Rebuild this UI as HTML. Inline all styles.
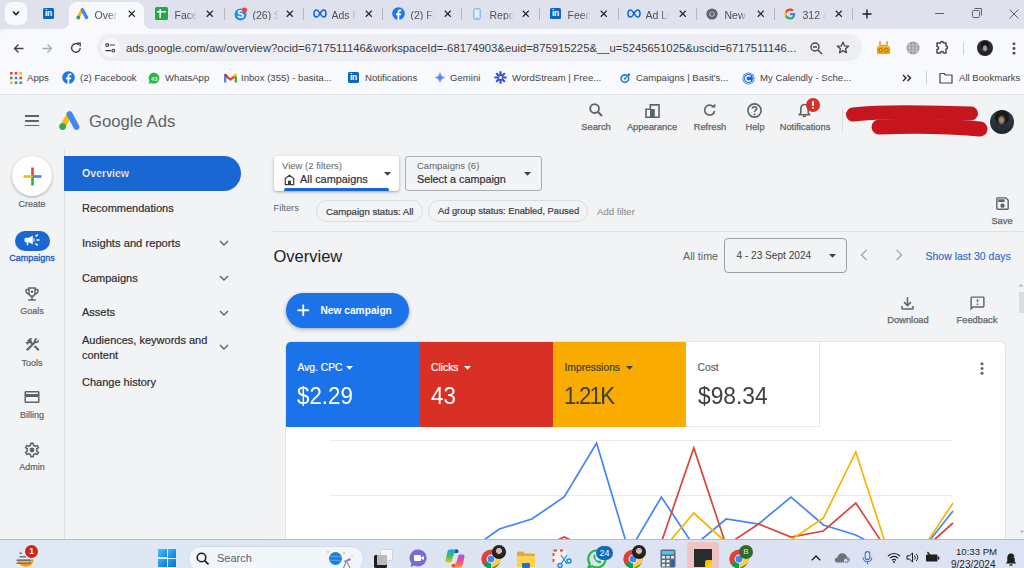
<!DOCTYPE html>
<html><head><meta charset="utf-8">
<style>
*{box-sizing:border-box;margin:0;padding:0}
html,body{width:1024px;height:568px;overflow:hidden;background:#f1f3f4;font-family:"Liberation Sans",sans-serif;position:relative}
.a{position:absolute}
.t{position:absolute;white-space:nowrap;line-height:1}
svg{position:absolute;overflow:visible}
/* chrome */
#tabs{left:0;top:0;width:1024px;height:29px;background:#dfe2ed}
#toolbar{left:0;top:29px;width:1024px;height:36px;background:#f8f9fc;border-top-left-radius:8px}
#bm{left:0;top:65px;width:1024px;height:30px;background:#f8f9fc;border-bottom:1px solid #e1e3e8}
.tabt{font-size:10.5px;color:#505050}
.sep{position:absolute;width:1px;height:12px;top:8px;background:#b4b7c0}
.x{position:absolute;font-size:13px;color:#202124}
.bmt{font-size:9.6px;color:#444}
/* ads */
.nav{font-size:11px;color:#2d2e31;-webkit-text-stroke:0.2px #2d2e31}
.rail{font-size:9px;color:#5f6368;text-align:center;width:64px;left:0;-webkit-text-stroke:0.2px currentColor}
.hdr{font-size:9.3px;color:#5f6368;text-align:center;-webkit-text-stroke:0.25px #5f6368}
#taskbar{left:0;top:539px;width:1024px;height:29px;background:linear-gradient(90deg,#dfe9f3 0%,#dde6f3 30%,#dce2f2 70%,#dce3f2 100%);border-top:1px solid #b6bbc2}
</style></head><body>

<!-- TAB STRIP -->
<div id="tabs" class="a">
  <div class="a" style="left:5px;top:2px;width:22px;height:23px;background:#f8f9fc;border-radius:7px"></div>
  <svg style="left:11px;top:9px" width="10" height="8" viewBox="0 0 10 8"><path d="M2 2.5 L5 5.5 L8 2.5" stroke="#202124" stroke-width="1.6" fill="none"/></svg>
  <!-- linkedin -->
  <div class="a" style="left:43px;top:8px;width:11px;height:11px;background:#0a66c2;border-radius:1.5px;color:#fff;font-size:8.5px;font-weight:700;line-height:11px;text-align:center;letter-spacing:-0.3px">in</div>
  <!-- active tab -->
  <div class="a" style="left:69px;top:2px;width:75px;height:27px;background:#f8f9fc;border-radius:8px 8px 0 0"></div>
  <div class="a" style="left:61px;top:21px;width:8px;height:8px;background:radial-gradient(circle at 0 0,#dfe2ed 8px,#f8f9fc 8.5px)"></div>
  <div class="a" style="left:144px;top:21px;width:8px;height:8px;background:radial-gradient(circle at 100% 0,#dfe2ed 8px,#f8f9fc 8.5px)"></div>

  <!-- tab icons -->
  <svg style="left:76px;top:8px" width="13" height="12" viewBox="0 0 13 12"><path d="M6.3 1.8 L3 7.8" stroke="#fbbc04" stroke-width="3" stroke-linecap="round"/><circle cx="2.3" cy="9.4" r="2" fill="#34a853"/><path d="M6.3 1.8 L10.6 9.6" stroke="#4285f4" stroke-width="3.3" stroke-linecap="round"/></svg>
  <div class="t tabt" style="left:94.5px;top:9.5px;width:23px;overflow:hidden;-webkit-mask-image:linear-gradient(90deg,#000 60%,transparent)">Overview</div>
  <svg style="left:127.5px;top:10px" width="7.5" height="7.5" viewBox="0 0 8 8"><path d="M0.8 0.8L7.2 7.2M7.2 0.8L0.8 7.2" stroke="#1f1f1f" stroke-width="1.15"/></svg>

  <svg style="left:154.5px;top:7px" width="13" height="13" viewBox="0 0 13 13"><rect x="0" y="0" width="13" height="13" rx="1.5" fill="#28a745"/><path d="M5.2 2V11M2 4.7H11" stroke="#fff" stroke-width="1.5"/></svg>
  <div class="t tabt" style="left:174.5px;top:9.5px;width:22px;overflow:hidden;-webkit-mask-image:linear-gradient(90deg,#000 60%,transparent)">Facebook</div>
  <svg style="left:205.5px;top:10px" width="7.5" height="7.5" viewBox="0 0 8 8"><path d="M0.8 0.8L7.2 7.2M7.2 0.8L0.8 7.2" stroke="#1f1f1f" stroke-width="1.15"/></svg>
  <div class="sep" style="left:224px"></div>

  <svg style="left:234px;top:7px" width="14" height="14" viewBox="0 0 14 14"><circle cx="6.5" cy="7.5" r="6" fill="#2b8de6"/><text x="6.5" y="11" font-family="Liberation Sans" font-weight="700" font-size="10" fill="#fff" text-anchor="middle">S</text><circle cx="10.5" cy="3" r="2.6" fill="#e8453c"/></svg>
  <div class="t tabt" style="left:252.5px;top:9.5px;width:26px;overflow:hidden;-webkit-mask-image:linear-gradient(90deg,#000 65%,transparent)">(26) Skype</div>
  <svg style="left:285.5px;top:10px" width="7.5" height="7.5" viewBox="0 0 8 8"><path d="M0.8 0.8L7.2 7.2M7.2 0.8L0.8 7.2" stroke="#1f1f1f" stroke-width="1.15"/></svg>
  <div class="sep" style="left:303px"></div>

  <svg style="left:313px;top:9px" width="14" height="9" viewBox="0 0 14 9"><path d="M3.5 1 C1.5 1 1 3.5 1 4.8 C1 6.8 2 8 3.3 8 C5 8 6.5 5.5 7 4.5 C8 2.8 9 1 10.6 1 C12.3 1 13 3 13 4.6 C13 6.5 12.2 8 10.8 8 C9 8 7.8 5.5 7 4.5 C6 3 5 1 3.5 1Z" stroke="#0668e1" stroke-width="1.5" fill="none"/></svg>
  <div class="t tabt" style="left:331.5px;top:9.5px;width:24px;overflow:hidden;-webkit-mask-image:linear-gradient(90deg,#000 65%,transparent)">Ads Manager</div>
  <svg style="left:364.5px;top:10px" width="7.5" height="7.5" viewBox="0 0 8 8"><path d="M0.8 0.8L7.2 7.2M7.2 0.8L0.8 7.2" stroke="#1f1f1f" stroke-width="1.15"/></svg>
  <div class="sep" style="left:382px"></div>

  <svg style="left:392px;top:7px" width="13" height="13" viewBox="0 0 13 13"><circle cx="6.5" cy="6.5" r="6.3" fill="#1877f2"/><path d="M7.3 13V8.2H9L9.3 6.4H7.3V5.3C7.3 4.7 7.6 4.3 8.4 4.3H9.4V2.7C9 2.6 8.4 2.6 7.9 2.6C6.4 2.6 5.5 3.5 5.5 5.1V6.4H3.9V8.2H5.5V13Z" fill="#fff"/></svg>
  <div class="t tabt" style="left:410.5px;top:9.5px;width:24px;overflow:hidden;-webkit-mask-image:linear-gradient(90deg,#000 65%,transparent)">(2) Facebook</div>
  <svg style="left:443.5px;top:10px" width="7.5" height="7.5" viewBox="0 0 8 8"><path d="M0.8 0.8L7.2 7.2M7.2 0.8L0.8 7.2" stroke="#1f1f1f" stroke-width="1.15"/></svg>
  <div class="sep" style="left:461px"></div>

  <svg style="left:472.5px;top:8px" width="8" height="12" viewBox="0 0 8 12"><rect x="0.8" y="0.8" width="6.4" height="10.4" rx="1.3" stroke="#6aa5f5" stroke-width="1" fill="#e3edfb"/><path d="M3 10H5" stroke="#6aa5f5" stroke-width="0.8"/></svg>
  <div class="t tabt" style="left:489.5px;top:9.5px;width:24px;overflow:hidden;-webkit-mask-image:linear-gradient(90deg,#000 65%,transparent)">Reports</div>
  <svg style="left:521.5px;top:10px" width="7.5" height="7.5" viewBox="0 0 8 8"><path d="M0.8 0.8L7.2 7.2M7.2 0.8L0.8 7.2" stroke="#1f1f1f" stroke-width="1.15"/></svg>
  <div class="sep" style="left:539px"></div>

  <div class="a" style="left:550px;top:8px;width:11px;height:11px;background:#0a66c2;border-radius:1.5px;color:#fff;font-size:8.5px;font-weight:700;line-height:11px;text-align:center;letter-spacing:-0.3px">in</div>
  <div class="t tabt" style="left:567.5px;top:9.5px;width:22px;overflow:hidden;-webkit-mask-image:linear-gradient(90deg,#000 65%,transparent)">Feed</div>
  <svg style="left:599.5px;top:10px" width="7.5" height="7.5" viewBox="0 0 8 8"><path d="M0.8 0.8L7.2 7.2M7.2 0.8L0.8 7.2" stroke="#1f1f1f" stroke-width="1.15"/></svg>
  <div class="sep" style="left:618px"></div>

  <svg style="left:627px;top:9px" width="14" height="9" viewBox="0 0 14 9"><path d="M3.5 1 C1.5 1 1 3.5 1 4.8 C1 6.8 2 8 3.3 8 C5 8 6.5 5.5 7 4.5 C8 2.8 9 1 10.6 1 C12.3 1 13 3 13 4.6 C13 6.5 12.2 8 10.8 8 C9 8 7.8 5.5 7 4.5 C6 3 5 1 3.5 1Z" stroke="#0668e1" stroke-width="1.5" fill="none"/></svg>
  <div class="t tabt" style="left:645.5px;top:9.5px;width:23px;overflow:hidden;-webkit-mask-image:linear-gradient(90deg,#000 65%,transparent)">Ad Library</div>
  <svg style="left:678.5px;top:10px" width="7.5" height="7.5" viewBox="0 0 8 8"><path d="M0.8 0.8L7.2 7.2M7.2 0.8L0.8 7.2" stroke="#1f1f1f" stroke-width="1.15"/></svg>
  <div class="sep" style="left:696px"></div>

  <svg style="left:706px;top:8px" width="12" height="12" viewBox="0 0 12 12"><circle cx="6" cy="6" r="5.6" fill="#5f6368"/><circle cx="6" cy="6" r="2.6" fill="#dfe2ed"/><circle cx="6" cy="6" r="1.9" fill="#5f6368"/></svg>
  <div class="t tabt" style="left:724.5px;top:9.5px;width:22px;overflow:hidden;-webkit-mask-image:linear-gradient(90deg,#000 70%,transparent)">New Tab</div>
  <svg style="left:756.5px;top:10px" width="7.5" height="7.5" viewBox="0 0 8 8"><path d="M0.8 0.8L7.2 7.2M7.2 0.8L0.8 7.2" stroke="#1f1f1f" stroke-width="1.15"/></svg>
  <div class="sep" style="left:774px"></div>

  <svg style="left:784px;top:8px" width="12" height="12" viewBox="0 0 24 24"><path d="M22.5 12.3c0-.8-.1-1.5-.2-2.2H12v4.2h5.9c-.3 1.4-1 2.5-2.2 3.3v2.7h3.6c2-1.9 3.2-4.7 3.2-8z" fill="#4285f4"/><path d="M12 23c3 0 5.5-1 7.3-2.7l-3.6-2.7c-1 .7-2.2 1.1-3.7 1.1-2.9 0-5.3-1.9-6.2-4.5H2.2v2.8C4 20.6 7.7 23 12 23z" fill="#34a853"/><path d="M5.8 14.2c-.2-.7-.4-1.4-.4-2.2s.1-1.5.4-2.2V7H2.2C1.4 8.5 1 10.2 1 12s.4 3.5 1.2 5l3.6-2.8z" fill="#fbbc05"/><path d="M12 5.4c1.6 0 3.1.6 4.2 1.6l3.2-3.2C17.5 2 15 1 12 1 7.7 1 4 3.4 2.2 7l3.6 2.8C6.7 7.3 9.1 5.4 12 5.4z" fill="#ea4335"/></svg>
  <div class="t tabt" style="left:802.5px;top:9.5px;width:23px;overflow:hidden;-webkit-mask-image:linear-gradient(90deg,#000 65%,transparent)">312 ads</div>
  <svg style="left:834.5px;top:10px" width="7.5" height="7.5" viewBox="0 0 8 8"><path d="M0.8 0.8L7.2 7.2M7.2 0.8L0.8 7.2" stroke="#1f1f1f" stroke-width="1.15"/></svg>
  <div class="sep" style="left:852px"></div>
  <svg style="left:862px;top:9px" width="10" height="10" viewBox="0 0 10 10"><path d="M5 0.5V9.5M0.5 5H9.5" stroke="#1f1f1f" stroke-width="1.4"/></svg>
  <!-- window controls -->
  <div class="a" style="left:935px;top:13px;width:9px;height:1px;background:#5f6368"></div>
  <div class="a" style="left:972px;top:10px;width:8px;height:8px;border:1px solid #5f6368;border-radius:1.5px"></div>
  <div class="a" style="left:974px;top:8px;width:8px;height:8px;border-top:1px solid #5f6368;border-right:1px solid #5f6368;border-radius:1.5px"></div>
  <svg style="left:1009px;top:9px" width="10" height="10" viewBox="0 0 10 10"><path d="M0.5 0.5L9.5 9.5M9.5 0.5L0.5 9.5" stroke="#5f6368" stroke-width="1"/></svg>
</div>


<!-- TOOLBAR -->
<div id="toolbar" class="a"></div>
<svg style="left:12.5px;top:43px" width="11" height="11" viewBox="0 0 11 11"><path d="M10.5 5.5H1.5M5.5 1.5L1.5 5.5L5.5 9.5" stroke="#474747" stroke-width="1.4" fill="none"/></svg>
<svg style="left:42px;top:43px" width="11" height="11" viewBox="0 0 11 11"><path d="M0.5 5.5H9.5M5.5 1.5L9.5 5.5L5.5 9.5" stroke="#a8abb0" stroke-width="1.3" fill="none"/></svg>
<svg style="left:70px;top:42px" width="12" height="12" viewBox="0 0 12 12"><path d="M10.2 6A4.3 4.3 0 1 1 8.8 2.8" stroke="#474747" stroke-width="1.4" fill="none"/><path d="M6.8 1.2H10.2V4.6" stroke="#474747" stroke-width="1.4" fill="none"/></svg>
<div class="a" style="left:97px;top:34px;width:765px;height:27px;background:#eceef4;border-radius:14px"></div>
<div class="a" style="left:101px;top:38px;width:19px;height:19px;background:#f8f9fc;border-radius:50%"></div>
<svg style="left:105px;top:43px" width="11" height="10" viewBox="0 0 11 10"><circle cx="2.2" cy="2" r="1.4" stroke="#3c3c3c" stroke-width="1.1" fill="none"/><path d="M4.8 2H10M0.5 7.6H6" stroke="#3c3c3c" stroke-width="1.2"/><circle cx="8.3" cy="7.6" r="1.4" stroke="#3c3c3c" stroke-width="1.1" fill="none"/></svg>
<div class="t" style="left:126px;top:43px;font-size:11.3px;color:#3b3b3b">ads.google.com/aw/overview?ocid=6717511146&amp;workspaceId=-68174903&amp;euid=875915225&amp;__u=5245651025&amp;uscid=6717511146...</div>
<svg style="left:810px;top:42px" width="13" height="13" viewBox="0 0 13 13"><circle cx="5" cy="5" r="4" stroke="#474747" stroke-width="1.4" fill="none"/><path d="M3 5H7M8 8L12 12" stroke="#474747" stroke-width="1.4"/></svg>
<svg style="left:836px;top:41px" width="14" height="13" viewBox="0 0 14 13"><path d="M7 1.2L8.7 4.9L12.6 5.2L9.6 7.8L10.5 11.7L7 9.6L3.5 11.7L4.4 7.8L1.4 5.2L5.3 4.9Z" stroke="#474747" stroke-width="1.3" fill="none" stroke-linejoin="round"/></svg>
<svg style="left:876px;top:40px" width="15" height="15" viewBox="0 0 15 15"><path d="M4 5.5V2.2M11 5.5V2.2" stroke="#6a6a6a" stroke-width="0.9"/><circle cx="4" cy="2" r="1.1" fill="#d6a93a"/><circle cx="11" cy="2" r="1.1" fill="#d6a93a"/><path d="M1 9C1 6 3 4.8 7.5 4.8C12 4.8 14 6 14 9V12.5C14 13.5 13.3 14 12.5 14H2.5C1.7 14 1 13.5 1 12.5Z" fill="#f2a20a"/><path d="M2 6.8H13" stroke="#f8c040" stroke-width="1"/><circle cx="4.6" cy="10" r="1.7" fill="#f6b733" stroke="#9a6200" stroke-width="0.8"/><circle cx="10.4" cy="10" r="1.7" fill="#f6b733" stroke="#9a6200" stroke-width="0.8"/></svg>
<svg style="left:906px;top:41px" width="14" height="14" viewBox="0 0 14 14"><circle cx="7" cy="7" r="6.5" fill="#9a9a9a"/><path d="M0.5 7H13.5M7 0.5V13.5M1.5 4H12.5M1.5 10H12.5M4 1.2C3 4 3 10 4 12.8M10 1.2C11 4 11 10 10 12.8" stroke="#d8d8d8" stroke-width="0.7" fill="none"/></svg>
<svg style="left:935px;top:41px" width="15" height="14" viewBox="0 0 15 14"><path d="M2 2H5.5A1.5 1.5 0 0 1 8.5 2H11V5A1.5 1.5 0 0 1 11 8V12H8.5A1.5 1.5 0 0 0 5.5 12H2V8.5A1.5 1.5 0 0 0 2 5.5Z" stroke="#474747" stroke-width="1.5" fill="none" stroke-linejoin="round"/></svg>
<div class="a" style="left:963px;top:42px;width:1px;height:13px;background:#c7d2ea"></div>
<div class="a" style="left:977px;top:40px;width:16px;height:16px;border-radius:50%;background:radial-gradient(ellipse 2.8px 3.6px at 50% 52%,#c8ae9e 0,#9c8070 70%,transparent 100%),radial-gradient(ellipse 4.5px 4.5px at 50% 32%,#151515 0 90%,transparent 100%),linear-gradient(#30353c,#1b2129)"></div>
<svg style="left:1012px;top:42px" width="4" height="13" viewBox="0 0 4 13"><circle cx="2" cy="1.8" r="1.4" fill="#474747"/><circle cx="2" cy="6.5" r="1.4" fill="#474747"/><circle cx="2" cy="11.2" r="1.4" fill="#474747"/></svg>
<div id="bm" class="a"></div>
<svg style="left:10px;top:72px" width="12" height="12" viewBox="0 0 12 12">
<rect x="0" y="0" width="2.6" height="2.6" fill="#ea4335"/><rect x="4.7" y="0" width="2.6" height="2.6" fill="#ea4335"/><rect x="9.4" y="0" width="2.6" height="2.6" fill="#fbbc04"/>
<rect x="0" y="4.7" width="2.6" height="2.6" fill="#34a853"/><rect x="4.7" y="4.7" width="2.6" height="2.6" fill="#4285f4"/><rect x="9.4" y="4.7" width="2.6" height="2.6" fill="#ea4335"/>
<rect x="0" y="9.4" width="2.6" height="2.6" fill="#fbbc04"/><rect x="4.7" y="9.4" width="2.6" height="2.6" fill="#34a853"/><rect x="9.4" y="9.4" width="2.6" height="2.6" fill="#4285f4"/></svg>
<div class="t bmt" style="left:27px;top:73px">Apps</div>
<svg style="left:62px;top:71px" width="13" height="13" viewBox="0 0 13 13"><circle cx="6.5" cy="6.5" r="6.3" fill="#1877f2"/><path d="M7.3 13V8.2H9L9.3 6.4H7.3V5.3C7.3 4.7 7.6 4.3 8.4 4.3H9.4V2.7C9 2.6 8.4 2.6 7.9 2.6C6.4 2.6 5.5 3.5 5.5 5.1V6.4H3.9V8.2H5.5V13Z" fill="#fff"/></svg>
<div class="t bmt" style="left:80px;top:73px">(2) Facebook</div>
<svg style="left:148px;top:71.5px" width="12.5" height="12.5" viewBox="0 0 12 12"><path d="M6 0.6A5.3 5.3 0 1 1 3.3 10.6L0.6 11.4L1.4 8.8A5.3 5.3 0 0 1 6 0.6Z" fill="#2cb742"/><text x="6" y="8.2" font-family="Liberation Sans" font-size="5.6" font-weight="700" fill="#e8f7ea" text-anchor="middle">43</text></svg>
<div class="t bmt" style="left:165px;top:73px">WhatsApp</div>
<svg style="left:223.5px;top:73px" width="13" height="10" viewBox="0 0 13 10"><path d="M1.2 2.5L6.5 6.5L11.8 2.5" stroke="#ea4335" stroke-width="2.2" fill="none" stroke-linejoin="round"/><path d="M1.2 1.8V9.5" stroke="#4285f4" stroke-width="2.3"/><path d="M11.8 3.5V9.5" stroke="#34a853" stroke-width="2.3"/><path d="M10.3 2.8L11.8 1.6" stroke="#fbbc04" stroke-width="2.2" stroke-linecap="round"/><path d="M1.2 1.8L2.8 3" stroke="#c5221f" stroke-width="2" stroke-linecap="round"/></svg>
<div class="t bmt" style="left:241px;top:73px">Inbox (355) - basita...</div>
<div class="a" style="left:348px;top:72px;width:11px;height:11px;background:#0a66c2;border-radius:1.5px;color:#fff;font-size:8.5px;font-weight:700;line-height:11px;text-align:center;letter-spacing:-0.3px">in</div>
<div class="t bmt" style="left:365px;top:73px">Notifications</div>
<svg style="left:434px;top:71px" width="12" height="13" viewBox="0 0 12 13"><path d="M6 0.5C6.5 4 8 6 11.5 6.5C8 7 6.5 9 6 12.5C5.5 9 4 7 0.5 6.5C4 6 5.5 4 6 0.5Z" fill="#5b8def"/></svg>
<div class="t bmt" style="left:450px;top:73px">Gemini</div>
<svg style="left:494px;top:71px" width="13" height="13" viewBox="0 0 13 13"><g stroke="#3a4fd8" stroke-width="2.2" stroke-linecap="round"><path d="M6.5 1.2V11.8M1.2 6.5H11.8M2.8 2.8L10.2 10.2M10.2 2.8L2.8 10.2"/></g><circle cx="6.5" cy="6.5" r="1.6" fill="#f8f9fc"/></svg>
<div class="t bmt" style="left:512px;top:73px">WordStream | Free...</div>
<svg style="left:620px;top:73px" width="10.5" height="10.5" viewBox="0 0 12 12"><circle cx="5.6" cy="6.4" r="4.3" stroke="#2a7fd4" stroke-width="1.9" fill="none"/><circle cx="5.6" cy="6.4" r="1.4" fill="#2a7fd4"/><path d="M6.5 5.5L10.8 1.2" stroke="#2a7fd4" stroke-width="1.3"/><path d="M9 1H11V3" stroke="#2a7fd4" stroke-width="1"/></svg>
<div class="t bmt" style="left:636px;top:73px">Campaigns | Basit's...</div>
<svg style="left:742px;top:71.5px" width="13" height="13" viewBox="0 0 14 14"><circle cx="7" cy="7" r="6.5" fill="#2b78f0"/><circle cx="7" cy="7" r="5.6" fill="#dce9fd"/><circle cx="7" cy="7" r="4.8" fill="#1a66f0"/><path d="M9.2 5.2A2.9 2.9 0 1 0 9.2 8.8" stroke="#fff" stroke-width="1.6" fill="none"/></svg>
<div class="t bmt" style="left:760px;top:73px">My Calendly - Sche...</div>
<svg style="left:902px;top:74px" width="10" height="8" viewBox="0 0 10 8"><path d="M1 1L4 4L1 7M5.5 1L8.5 4L5.5 7" stroke="#1f1f1f" stroke-width="1.3" fill="none"/></svg>
<div class="a" style="left:926px;top:71px;width:1px;height:13px;background:#c7d2ea"></div>
<svg style="left:939px;top:72px" width="14" height="12" viewBox="0 0 14 12"><path d="M1 1.5H5.2L6.5 3H13V11H1Z" stroke="#474747" stroke-width="1.2" fill="none" stroke-linejoin="round"/></svg>
<div class="t bmt" style="left:959px;top:73px">All Bookmarks</div>

<!-- ADS HEADER -->
<div class="a" style="left:0;top:95px;width:1024px;height:445px;background:#f1f3f4"></div>
<div class="a" style="left:25px;top:115px;width:14px;height:1.6px;background:#5f6368"></div>
<div class="a" style="left:25px;top:120px;width:14px;height:1.6px;background:#5f6368"></div>
<div class="a" style="left:25px;top:124.5px;width:14px;height:1.6px;background:#5f6368"></div>
<svg style="left:59px;top:111px" width="22" height="20" viewBox="0 0 22 20"><path d="M10.6 3.2L4.5 14" stroke="#fbbc04" stroke-width="5.6" stroke-linecap="round"/><circle cx="3.6" cy="15.6" r="3.4" fill="#34a853"/><path d="M10.6 3.2L17.4 15.8" stroke="#4285f4" stroke-width="6" stroke-linecap="round"/></svg>
<div class="t" style="left:89px;top:113.7px;font-size:16.7px;color:#5f6368">Google Ads</div>

<svg style="left:589px;top:103px" width="14" height="14" viewBox="0 0 14 14"><circle cx="5.6" cy="5.6" r="4.4" stroke="#5f6368" stroke-width="1.8" fill="none"/><path d="M8.8 8.8L13 13" stroke="#5f6368" stroke-width="2"/></svg>
<div class="t hdr" style="left:566px;top:123.2px;width:60px">Search</div>
<svg style="left:645px;top:103.5px" width="15" height="14" viewBox="0 0 15 14"><path d="M1 13.2V5.3H5.3V0.9H14V13.2Z" stroke="#5f6368" stroke-width="1.6" fill="none"/><rect x="5" y="5" width="4.8" height="8.5" fill="#5f6368"/></svg>
<div class="t hdr" style="left:622px;top:123.2px;width:60px">Appearance</div>
<svg style="left:703px;top:103px" width="14" height="14" viewBox="0 0 14 14"><path d="M11.6 8A5 5 0 1 1 10.2 3.6" stroke="#5f6368" stroke-width="1.7" fill="none"/><path d="M8 4.6H12.4V0.4Z" fill="#5f6368"/></svg>
<div class="t hdr" style="left:680px;top:123.2px;width:60px">Refresh</div>
<svg style="left:747px;top:103px" width="15" height="15" viewBox="0 0 15 15"><circle cx="7.5" cy="7.5" r="6.6" stroke="#5f6368" stroke-width="1.6" fill="none"/><path d="M5.3 5.8C5.3 4.4 6.3 3.7 7.5 3.7C8.7 3.7 9.7 4.5 9.7 5.6C9.7 7.2 7.6 7.2 7.6 9" stroke="#5f6368" stroke-width="1.6" fill="none"/><circle cx="7.6" cy="11.2" r="1" fill="#5f6368"/></svg>
<div class="t hdr" style="left:725px;top:123.2px;width:60px">Help</div>
<svg style="left:798px;top:103px" width="13" height="15" viewBox="0 0 13 15"><path d="M6.5 1.5C4 1.5 2.8 3.5 2.8 6V10L1.2 11.8H11.8L10.2 10V6C10.2 3.5 9 1.5 6.5 1.5Z" stroke="#5f6368" stroke-width="1.6" fill="none" stroke-linejoin="round"/><path d="M5 13.3H8" stroke="#5f6368" stroke-width="1.6"/></svg>
<div class="a" style="left:806px;top:98px;width:14px;height:14px;border-radius:50%;background:#d93025"></div>
<div class="a" style="left:812.2px;top:101px;width:1.8px;height:5px;background:#fff;border-radius:1px"></div>
<div class="a" style="left:812.2px;top:107.3px;width:1.8px;height:1.8px;background:#fff;border-radius:1px"></div>
<div class="t hdr" style="left:775px;top:123.2px;width:60px">Notifications</div>
<div class="a" style="left:842px;top:108px;width:1px;height:24px;background:#dadce0"></div>
<svg style="left:843px;top:103px" width="150" height="36" viewBox="0 0 150 36"><path d="M10 11.5C40 8 80 9 128 10.5" stroke="#c4161c" stroke-width="14" stroke-linecap="round" fill="none"/><path d="M36 24C70 22.5 110 23.5 137 26" stroke="#c4161c" stroke-width="15" stroke-linecap="round" fill="none"/></svg>
<div class="a" style="left:990px;top:109.5px;width:24px;height:24px;border-radius:50%;background:radial-gradient(ellipse 4px 5px at 48% 42%,#b89a88 0,#8a6f62 60%,transparent 100%),radial-gradient(circle at 50% 30%,#1a1a1a 0 7px,transparent 7.5px),linear-gradient(#3a3f46,#1d2631)"></div>

<!-- RAIL -->
<div class="a" style="left:64px;top:148px;width:1px;height:392px;background:#dfe1e4"></div>
<div class="a" style="left:12px;top:156px;width:40px;height:40px;border-radius:50%;background:#fff;box-shadow:0 1px 3px rgba(60,64,67,.3),0 1px 2px rgba(60,64,67,.15)"></div>
<svg style="left:22.5px;top:166.8px" width="19" height="19" viewBox="0 0 18 18"><path d="M9 0.5V9" stroke="#ea4335" stroke-width="2.5"/><path d="M9 9H17.5" stroke="#4285f4" stroke-width="2.5"/><path d="M9 9V17.5" stroke="#34a853" stroke-width="2.5"/><path d="M0.5 9H9" stroke="#fbbc04" stroke-width="2.5"/></svg>
<div class="t rail" style="top:199.5px">Create</div>
<div class="a" style="left:14.5px;top:230.5px;width:35px;height:20px;border-radius:10px;background:#1967d2"></div>
<svg style="left:23px;top:231px" width="18" height="18" viewBox="0 0 24 24"><path fill="#fff" d="M18 11v2h4v-2h-4zm-2 6.61c.96.71 2.21 1.65 3.2 2.39.4-.53.8-1.07 1.2-1.6-.99-.74-2.24-1.68-3.2-2.4-.4.54-.8 1.08-1.2 1.61zM20.4 5.6c-.4-.53-.8-1.07-1.2-1.6-.99.74-2.24 1.68-3.2 2.4.4.53.8 1.07 1.2 1.6.96-.72 2.21-1.65 3.2-2.4zM4 9c-1.1 0-2 .9-2 2v2c0 1.1.9 2 2 2h1v4h2v-4h1l5 3V6L8 9H4zm11.5 3c0-1.33-.58-2.53-1.5-3.35v6.69c.92-.81 1.5-2.01 1.5-3.34z"/></svg>
<div class="t rail" style="top:254.3px;color:#1559c0;-webkit-text-stroke:0.3px #1559c0">Campaigns</div>
<svg style="left:23px;top:284.5px" width="18" height="18" viewBox="0 0 24 24"><path fill="#5f6368" d="M19 5h-2V3H7v2H5c-1.1 0-2 .9-2 2v1c0 2.55 1.92 4.63 4.39 4.94.63 1.5 1.98 2.63 3.61 2.96V19H7v2h10v-2h-4v-3.1c1.63-.33 2.98-1.46 3.61-2.96C19.08 12.63 21 10.55 21 8V7c0-1.1-.9-2-2-2zM5 8V7h2v3.82C5.84 10.4 5 9.3 5 8zm7 6c-1.65 0-3-1.35-3-3V5h6v6c0 1.65-1.35 3-3 3zm7-6c0 1.3-.84 2.4-2 2.82V7h2v1z"/><circle cx="12" cy="9" r="1.6" fill="#5f6368"/></svg>
<div class="t rail" style="top:306.8px">Goals</div>
<svg style="left:23.5px;top:336px" width="17" height="17" viewBox="0 0 24 24"><path fill="#5f6368" d="M13.78 15.3L19.78 21.3L21.89 19.14L15.89 13.14L13.78 15.3M17.5 10.1C17.11 10.1 16.69 10.05 16.36 9.91L4.97 21.25L2.86 19.14L10.27 11.74L8.5 9.96L7.78 10.66L6.33 9.25V12.11L5.63 12.81L2.11 9.25L2.81 8.55H5.62L4.22 7.14L7.78 3.58C8.95 2.41 10.83 2.41 12 3.58L9.89 5.74L11.3 7.14L10.59 7.85L12.38 9.63L14.2 7.75C14.06 7.42 14 7 14 6.63C14 4.66 15.56 3.11 17.5 3.11C18.09 3.11 18.61 3.25 19.08 3.53L16.41 6.2L17.91 7.7L20.58 5.03C20.86 5.5 21 6 21 6.63C21 8.55 19.45 10.1 17.5 10.1Z"/></svg>
<div class="t rail" style="top:358.5px">Tools</div>
<svg style="left:23px;top:388.3px" width="18" height="18" viewBox="0 0 24 24"><path fill="#5f6368" d="M20 4H4c-1.11 0-1.99.89-1.99 2L2 18c0 1.11.89 2 2 2h16c1.11 0 2-.89 2-2V6c0-1.11-.89-2-2-2zm0 14H4v-6h16v6zm0-10H4V6h16v2z"/></svg>
<div class="t rail" style="top:410.5px">Billing</div>
<svg style="left:23px;top:440.5px" width="18" height="18" viewBox="0 0 24 24"><path fill="#5f6368" d="M19.43 12.98c.04-.32.07-.64.07-.98 0-.34-.03-.66-.07-.98l2.11-1.65c.19-.15.24-.42.12-.64l-2-3.46c-.09-.16-.26-.25-.44-.25-.06 0-.12.01-.17.03l-2.49 1c-.52-.4-1.080-.73-1.690-.98l-.38-2.65C14.46 2.18 14.25 2 14 2h-4c-.25 0-.46.18-.49.42l-.38 2.65c-.61.25-1.17.59-1.69.98l-2.49-1c-.06-.02-.12-.03-.18-.03-.17 0-.34.09-.43.25l-2 3.460c-.13.22-.07.49.12.64l2.11 1.65c-.04.32-.07.65-.07.98 0 .33.03.66.07.98l-2.11 1.65c-.19.15-.24.42-.12.64l2 3.46c.09.16.26.25.44.25.06 0 .12-.01.17-.03l2.49-1c.52.4 1.08.73 1.69.98l.38 2.65c.03.24.24.42.49.42h4c.25 0 .46-.18.49-.42l.38-2.65c.61-.25 1.17-.59 1.69-.98l2.49 1c.06.02.12.03.18.03.17 0 .34-.09.43-.25l2-3.46c.12-.22.07-.49-.12-.64l-2.11-1.65zm-1.98-1.71c.04.31.05.52.05.73 0 .21-.02.43-.05.73l-.14 1.13.89.7 1.08.84-.7 1.21-1.27-.51-1.04-.42-.9.68c-.43.32-.84.56-1.25.73l-1.06.43-.16 1.13-.2 1.35h-1.4l-.19-1.35-.16-1.13-1.06-.43c-.43-.18-.83-.41-1.23-.71l-.91-.7-1.06.43-1.270.51-.7-1.21 1.08-.84.89-.7-.14-1.13c-.03-.31-.05-.54-.05-.74s.02-.43.05-.73l.14-1.13-.89-.7-1.08-.84.7-1.21 1.27.51 1.04.42.9-.68c.43-.32.84-.56 1.25-.73l1.06-.43.16-1.13.2-1.35h1.39l.19 1.35.16 1.13 1.06.43c.43.18.83.41 1.23.71l.91.7 1.06-.43 1.27-.51.7 1.21-1.07.85-.89.7.14 1.13z"/><circle cx="12" cy="12" r="3.2" fill="#5f6368"/></svg>
<div class="t rail" style="top:462.5px">Admin</div>

<!-- NAV -->
<div class="a" style="left:64px;top:156px;width:177px;height:34.5px;background:#1967d2;border-radius:0 17.25px 17.25px 0"></div>
<div class="t nav" style="left:82px;top:168px;font-size:10.6px;font-weight:700;color:#fff">Overview</div>
<div class="t nav" style="left:82px;top:202.8px">Recommendations</div>
<div class="t nav" style="left:82px;top:237.5px;font-size:11.2px">Insights and reports</div>
<div class="t nav" style="left:82px;top:272.5px">Campaigns</div>
<div class="t nav" style="left:82px;top:307px">Assets</div>
<div class="t nav" style="left:82px;top:334.5px">Audiences, keywords and</div>
<div class="t nav" style="left:82px;top:349.5px">content</div>
<div class="t nav" style="left:82px;top:377px">Change history</div>
<svg style="left:219px;top:240px" width="10" height="6" viewBox="0 0 10 6"><path d="M1 1L5 5L9 1" stroke="#5f6368" stroke-width="1.4" fill="none"/></svg>
<svg style="left:219px;top:275px" width="10" height="6" viewBox="0 0 10 6"><path d="M1 1L5 5L9 1" stroke="#5f6368" stroke-width="1.4" fill="none"/></svg>
<svg style="left:219px;top:309.5px" width="10" height="6" viewBox="0 0 10 6"><path d="M1 1L5 5L9 1" stroke="#5f6368" stroke-width="1.4" fill="none"/></svg>
<svg style="left:219px;top:344px" width="10" height="6" viewBox="0 0 10 6"><path d="M1 1L5 5L9 1" stroke="#5f6368" stroke-width="1.4" fill="none"/></svg>

<!-- VIEW / FILTER -->
<div class="a" style="left:273.5px;top:156px;width:125.5px;height:35px;background:#fff;border-radius:3px;box-shadow:0 1px 2px rgba(60,64,67,.3),0 1px 3px 1px rgba(60,64,67,.12);overflow:hidden"><div class="a" style="left:10.5px;top:32px;width:105px;height:4px;background:#1967d2;border-radius:2px 2px 0 0"></div></div>
<div class="t" style="left:282px;top:160.8px;font-size:9.5px;color:#5f6368">View (2 filters)</div>
<svg style="left:283.5px;top:173.5px" width="11" height="11.5" viewBox="0 0 12 13"><path d="M1.2 12V5.2L6 1.3L10.8 5.2V12Z" stroke="#3c4043" stroke-width="1.4" fill="none" stroke-linejoin="round"/><rect x="4.3" y="7.5" width="3.4" height="4.5" fill="#3c4043"/></svg>
<div class="t" style="left:300px;top:173.5px;font-size:10.9px;color:#303134;-webkit-text-stroke:0.2px #303134">All campaigns</div>
<svg style="left:384px;top:172px" width="7" height="4" viewBox="0 0 7 4"><path d="M0 0H7L3.5 3.8Z" fill="#3c4043"/></svg>
<div class="a" style="left:405px;top:156px;width:137px;height:34.5px;border:1px solid #a9adb2;border-radius:3px"></div>
<div class="t" style="left:417px;top:161px;font-size:9.5px;color:#5f6368">Campaigns (6)</div>
<div class="t" style="left:417px;top:173.5px;font-size:10.8px;color:#303134;-webkit-text-stroke:0.2px #303134">Select a campaign</div>
<svg style="left:523.5px;top:172px" width="7" height="4" viewBox="0 0 7 4"><path d="M0 0H7L3.5 3.8Z" fill="#3c4043"/></svg>

<div class="t" style="left:273.5px;top:203.8px;font-size:9.3px;color:#5f6368">Filters</div>
<div class="a" style="left:316px;top:200px;width:107px;height:22px;border:1px solid #dadce0;border-radius:11px"></div>
<div class="t" style="left:326px;top:206.5px;font-size:9.6px;color:#3c4043;-webkit-text-stroke:0.2px #3c4043">Campaign status: All</div>
<div class="a" style="left:428px;top:200px;width:160px;height:22px;border:1px solid #dadce0;border-radius:11px"></div>
<div class="t" style="left:438px;top:207.3px;font-size:9.3px;color:#3c4043;-webkit-text-stroke:0.2px #3c4043">Ad group status: Enabled, Paused</div>
<div class="t" style="left:597px;top:206.5px;font-size:9.6px;color:#80868b">Add filter</div>
<svg style="left:993.5px;top:195px" width="17" height="17" viewBox="0 0 24 24"><path fill="#5f6368" d="M17 3H5c-1.11 0-2 .9-2 2v14c0 1.1.89 2 2 2h14c1.1 0 2-.9 2-2V7l-4-4zm2 16H5V5h11.17L19 7.83V19zm-7-7c-1.66 0-3 1.34-3 3s1.34 3 3 3 3-1.34 3-3-1.34-3-3-3zM6 6h9v4H6z"/></svg>
<div class="t hdr" style="left:982px;top:217px;width:40px">Save</div>
<div class="a" style="left:273px;top:231px;width:751px;height:1px;background:#dfe1e5"></div>

<!-- OVERVIEW ROW -->
<div class="t" style="left:273.5px;top:247.8px;font-size:16.5px;color:#202124">Overview</div>
<div class="t" style="left:683px;top:250.5px;font-size:10.7px;color:#5f6368">All time</div>
<div class="a" style="left:724px;top:238px;width:122.5px;height:34.5px;border:1px solid #9aa0a6;border-radius:4px"></div>
<div class="t" style="left:736.5px;top:251px;font-size:10.1px;color:#3c4043">4 - 23 Sept 2024</div>
<svg style="left:828.5px;top:253.5px" width="7" height="4" viewBox="0 0 7 4"><path d="M0 0H7L3.5 3.8Z" fill="#3c4043"/></svg>
<svg style="left:860px;top:249px" width="8" height="12" viewBox="0 0 8 12"><path d="M6.5 1L1.5 6L6.5 11" stroke="#a4a8ad" stroke-width="1.3" fill="none"/></svg>
<svg style="left:895px;top:249px" width="8" height="12" viewBox="0 0 8 12"><path d="M1.5 1L6.5 6L1.5 11" stroke="#a4a8ad" stroke-width="1.3" fill="none"/></svg>
<div class="t" style="left:925.5px;top:250.5px;font-size:10.5px;color:#2a62cf;-webkit-text-stroke:0.1px #2a62cf">Show last 30 days</div>

<!-- NEW CAMPAIGN -->
<div class="a" style="left:285.5px;top:293.3px;width:123.7px;height:34.4px;border-radius:17.25px;background:#1a73e8;box-shadow:0 1px 3px rgba(60,64,67,.3),0 2px 4px 1px rgba(60,64,67,.12)"></div>
<svg style="left:297px;top:304.4px" width="12.5" height="12.5" viewBox="0 0 14 14"><path d="M7 0.5V13.5M0.5 7H13.5" stroke="#fff" stroke-width="2"/></svg>
<div class="t" style="left:320.5px;top:306.3px;font-size:10.2px;font-weight:700;color:#fff">New campaign</div>
<svg style="left:898px;top:294px" width="19" height="19" viewBox="0 0 24 24"><path fill="#5f6368" d="M18 15v3H6v-3H4v3c0 1.1.9 2 2 2h12c1.1 0 2-.9 2-2v-3h-2zm-1-4l-1.41-1.41L13 12.17V4h-2v8.17L8.41 9.59 7 11l5 5 5-5z"/></svg>
<div class="t hdr" style="left:878px;top:315.5px;width:60px">Download</div>
<svg style="left:968.5px;top:295px" width="17" height="17" viewBox="0 0 24 24"><path fill="#5f6368" d="M20 2H4c-1.1 0-1.99.9-1.99 2L2 22l4-4h14c1.1 0 2-.9 2-2V4c0-1.1-.9-2-2-2zm0 14H5.17L4 17.17V4h16v12zM11 12h2v2h-2zm0-6h2v4h-2z"/></svg>
<div class="t hdr" style="left:947px;top:315.5px;width:60px">Feedback</div>
<div class="a" style="left:1019px;top:292px;width:5px;height:21px;background:#dadce0"></div>
<svg style="left:1019px;top:530px" width="6" height="4" viewBox="0 0 6 4"><path d="M0.5 0.5L3 3.2L5.5 0.5Z" fill="#b8bbbf"/></svg>
<svg style="left:1018px;top:283px" width="6" height="4" viewBox="0 0 6 4"><path d="M0.5 3.5L3 0.8L5.5 3.5Z" fill="#b8bbbf"/></svg>

<!-- CARD -->
<div class="a" style="left:285.5px;top:342px;width:719px;height:220px;background:#fff;border-radius:5px 5px 0 0;box-shadow:0 0 0 1px #e3e5e8;overflow:hidden">
  <div class="a" style="left:0;top:0;width:134px;height:84.5px;background:#1a73e8"></div>
  <div class="a" style="left:134px;top:0;width:133.5px;height:84.5px;background:#d93025"></div>
  <div class="a" style="left:267.5px;top:0;width:133px;height:84.5px;background:#f9ab00"></div>
  <div class="a" style="left:400.5px;top:0;width:133.5px;height:84.5px;background:#fff;border-right:1px solid #e8eaed;border-bottom:1px solid #e8eaed"></div>
</div>
<div class="t" style="left:297.5px;top:363px;font-size:10.3px;color:#fff;-webkit-text-stroke:0.2px #fff">Avg. CPC</div>
<svg style="left:346px;top:366px" width="7" height="4" viewBox="0 0 7 4"><path d="M0 0H7L3.5 3.8Z" fill="#fff"/></svg>
<div class="t" style="left:297px;top:385px;font-size:23.5px;transform:scaleX(0.95);transform-origin:0 0;color:#fff">$2.29</div>
<div class="t" style="left:431px;top:363px;font-size:10.3px;color:#fff;-webkit-text-stroke:0.2px #fff">Clicks</div>
<svg style="left:464px;top:366px" width="7" height="4" viewBox="0 0 7 4"><path d="M0 0H7L3.5 3.8Z" fill="#fff"/></svg>
<div class="t" style="left:431px;top:385px;font-size:23.5px;transform:scaleX(0.95);transform-origin:0 0;color:#fff">43</div>
<div class="t" style="left:564.5px;top:363px;font-size:10.3px;color:#3c4043;-webkit-text-stroke:0.2px #3c4043">Impressions</div>
<svg style="left:626px;top:366px" width="7" height="4" viewBox="0 0 7 4"><path d="M0 0H7L3.5 3.8Z" fill="#3c4043"/></svg>
<div class="t" style="left:564px;top:385px;font-size:23.5px;transform:scaleX(0.95);transform-origin:0 0;color:#3c4043;letter-spacing:-1.9px">1.21K</div>
<div class="t" style="left:697.5px;top:363px;font-size:10.3px;color:#5f6368;-webkit-text-stroke:0.2px #5f6368">Cost</div>
<div class="t" style="left:698.3px;top:385px;font-size:23.5px;transform:scaleX(0.97);transform-origin:0 0;color:#3c4043">$98.34</div>
<svg style="left:980px;top:362px" width="4" height="13" viewBox="0 0 4 13"><circle cx="2" cy="1.8" r="1.5" fill="#5f6368"/><circle cx="2" cy="6.5" r="1.5" fill="#5f6368"/><circle cx="2" cy="11.2" r="1.5" fill="#5f6368"/></svg>

<!-- CHART -->
<div class="a" style="left:330px;top:439.7px;width:623px;height:1px;background:#e8eaed"></div>
<div class="a" style="left:330px;top:495px;width:623px;height:1px;background:#e8eaed"></div>
<svg style="left:0;top:0" width="1024" height="540" viewBox="0 0 1024 540">
<polyline fill="none" stroke="#4285f4" stroke-width="1.7" stroke-linejoin="miter" points="337.4,552 369.8,552 402.2,552 434.6,552 467,552 499.4,529 531.8,519 564.2,497 596.6,443 629,552 661.4,497 693.8,546 726.2,519 758.6,524 791,497 823.4,525 855.8,535 888.2,552 920.6,552 953,511"/>
<polyline fill="none" stroke="#db4437" stroke-width="1.7" points="337.4,552 531.8,552 564.2,537 596.6,552 661.4,542 693.8,448 726.2,545.5 758.6,524 791,537 823.4,531 855.8,503 888.2,552 920.6,552 953,523"/>
<polyline fill="none" stroke="#f4b400" stroke-width="1.7" points="661.4,551 693.8,513 726.2,542.5 758.6,552 791,540 823.4,518 855.8,452 888.2,552 920.6,552 953,503"/>
</svg>

<!-- TASKBAR -->
<div id="taskbar" class="a"></div>
<!-- weather -->
<svg style="left:15px;top:551px" width="22" height="17" viewBox="0 0 22 17"><path d="M2 7.5A8.6 8.6 0 0 0 19 7.5Z" fill="#f29a1a" transform="translate(0,1)"/><path d="M4.5 2.3H7M4.5 5.7H11M1.5 9.2H16M1.5 12.2H16" stroke="#707379" stroke-width="1.5"/><path d="M5 10.7H15" stroke="#f7b82e" stroke-width="1.2"/></svg>
<div class="a" style="left:25px;top:544.5px;width:13px;height:13px;border-radius:50%;background:#c9251a;color:#fff;font-size:8.5px;font-weight:700;line-height:13px;text-align:center">1</div>
<!-- windows -->
<div class="a" style="left:158px;top:549px;width:8.6px;height:8.4px;background:linear-gradient(135deg,#4cc2ff,#0f8ae0)"></div>
<div class="a" style="left:167.6px;top:549px;width:8.4px;height:8.6px;background:linear-gradient(135deg,#3cb4fb,#0a7fd8)"></div>
<div class="a" style="left:158px;top:558.6px;width:8.6px;height:8.6px;background:linear-gradient(135deg,#3ab0f8,#0a7ad4)"></div>
<div class="a" style="left:167.6px;top:558.6px;width:8.4px;height:8.6px;background:linear-gradient(135deg,#2aa2f0,#0670c8)"></div>
<!-- search -->
<div class="a" style="left:188px;top:546px;width:176px;height:26px;border-radius:13px;background:#f1f5fc;border:1px solid #d3dae6"></div>
<svg style="left:196px;top:552px" width="14" height="13" viewBox="0 0 14 13"><circle cx="5.5" cy="5.5" r="4.3" stroke="#1f1f1f" stroke-width="1.6" fill="none"/><path d="M8.7 8.7L12.5 12.3" stroke="#1f1f1f" stroke-width="1.7"/></svg>
<div class="t" style="left:217px;top:553px;font-size:11px;color:#5d5f63">Search</div>
<svg style="left:324px;top:548px" width="34" height="20" viewBox="0 0 34 20"><circle cx="11.5" cy="10.5" r="6.5" fill="#1d7fd6"/><path d="M6 8C9 9 14 7.5 17 9M6 12C9 13 14 11.5 17 13" stroke="#58b0f0" stroke-width="1" fill="none"/><path d="M20 13L26 10L27 12L21 14.5Z" fill="#8c7ab8"/><path d="M22 14L19.5 20M23 14L26 20" stroke="#7a6aa8" stroke-width="1"/><circle cx="4" cy="4" r="1" fill="#f3c23c"/><circle cx="20" cy="5" r="1" fill="#f3c23c"/><circle cx="28" cy="8" r="0.8" fill="#f3c23c"/></svg>
<!-- task view -->
<div class="a" style="left:380px;top:549px;width:13px;height:12px;background:#f4f5f8;border:1px solid #cfd2d8;border-radius:1.5px"></div>
<div class="a" style="left:374px;top:555px;width:13px;height:13px;background:#1f1f1f;border-radius:1.5px"></div>
<div class="a" style="left:377px;top:555px;width:10px;height:10px;background:#b8babe;border-radius:1px"></div>
<!-- teams -->
<svg style="left:409px;top:548px" width="20" height="20" viewBox="0 0 20 20"><path d="M10 1.5A8.5 8.5 0 1 1 5 17.4L1.6 19L2.4 15.2A8.5 8.5 0 0 1 10 1.5Z" fill="#7b6ad6"/><rect x="5" y="7" width="7" height="6" rx="1" fill="#fff"/><path d="M12 9.5L15 8V12L12 10.5Z" fill="#fff"/></svg>
<!-- copilot -->
<svg style="left:445px;top:548.5px" width="20" height="19" viewBox="0 0 20 19"><defs><linearGradient id="cp1" x1="0" y1="0" x2="0" y2="1"><stop offset="0" stop-color="#1aa0f0"/><stop offset=".5" stop-color="#3cbf6a"/><stop offset="1" stop-color="#f5c400"/></linearGradient><linearGradient id="cp2" x1="0" y1="0" x2="0" y2="1"><stop offset="0" stop-color="#b04ff0"/><stop offset=".5" stop-color="#f54a8a"/><stop offset="1" stop-color="#f8963a"/></linearGradient></defs>
<path d="M4.5 0.5H11.5C13 0.5 13.8 1.5 13.5 3L11.8 4H10.5C9.5 4 9 4.6 8.7 5.5L6.7 12C6.4 13 5.7 13.5 4.8 13.5H2.2C0.9 13.5 0.2 12.6 0.5 11.3L2.5 2.5C2.8 1.2 3.5 0.5 4.5 0.5Z" fill="url(#cp1)"/>
<path d="M10 4H12.2C13 4 13.5 3.2 13.3 2.5L12.5 0.5H10.5Z" fill="#1f3fc0"/>
<path d="M15.5 18.5H8.5C7 18.5 6.2 17.5 6.5 16L8.2 15H9.5C10.5 15 11 14.4 11.3 13.5L13.3 7C13.6 6 14.3 5.5 15.2 5.5H17.8C19.1 5.5 19.8 6.4 19.5 7.7L17.5 16.5C17.2 17.8 16.5 18.5 15.5 18.5Z" fill="url(#cp2)"/>
<path d="M10 15H7.8C7 15 6.5 15.8 6.7 16.5L7.5 18.5H9.5Z" fill="#f0502a"/>
</svg>
<!-- chrome 1 -->
<svg style="left:481px;top:549px" width="20" height="20" viewBox="0 0 20 20"><circle cx="10" cy="10" r="9.5" fill="#db4437"/><path d="M10 10L1.8 14.75A9.5 9.5 0 0 0 10 19.5A9.5 9.5 0 0 0 18.2 14.75Z" fill="#0f9d58"/><path d="M10 10L18.2 5.25A9.5 9.5 0 0 1 18.2 14.75L10 19.5Z" fill="#ffcd40"/><path d="M10 10L1.8 5.25A9.5 9.5 0 0 0 1.8 14.75Z" fill="#db4437"/><circle cx="10" cy="10" r="4.4" fill="#fff"/><circle cx="10" cy="10" r="3.5" fill="#4285f4"/></svg>
<div class="a" style="left:492px;top:545px;width:14px;height:14px;border-radius:50%;background:radial-gradient(circle at 50% 42%,#d8b9a6 0 2.6px,#2a2a2a 3.3px,#1c1c1c 7px)"></div>
<!-- folder -->
<svg style="left:516px;top:550px" width="20" height="18" viewBox="0 0 20 18"><path d="M1 3C1 2 1.6 1.5 2.5 1.5H7L9 3.5H17.5C18.5 3.5 19 4 19 5V17H1Z" fill="#e8a92a"/><path d="M1 6H19V17H1Z" fill="#fcd150"/><rect x="6" y="13" width="8" height="5" rx="1" fill="#1f6fcf"/></svg>
<!-- snipping -->
<svg style="left:552px;top:549px" width="20" height="19" viewBox="0 0 20 19"><rect x="1" y="1" width="13" height="13" rx="1.5" fill="#f6f0ef"/><path d="M1.5 1.5H5M8 1.5H11M1.5 4V7M1.5 10V13" stroke="#d84a2f" stroke-width="1.8"/><path d="M9 6L15 15M15 6L9 15" stroke="#1e88d8" stroke-width="1.2"/><circle cx="8" cy="16.5" r="2" fill="none" stroke="#1e88d8" stroke-width="1.4"/><circle cx="17" cy="12" r="2" fill="none" stroke="#1e88d8" stroke-width="1.4"/></svg>
<!-- whatsapp -->
<svg style="left:587px;top:549px" width="20" height="20" viewBox="0 0 20 20"><path d="M10 1.5A8.5 8.5 0 1 1 5.3 17.1L1.5 18.5L2.8 14.8A8.5 8.5 0 0 1 10 1.5Z" fill="none" stroke="#25b843" stroke-width="2.2"/><path d="M6.5 6C7 5 8 5.3 8.2 6.2L8.6 7.5C8.7 8 8 8.5 8.3 9.2C9 10.5 9.8 11.3 11 11.8C11.6 12 12 11.3 12.5 11.4L13.7 12C14.5 12.4 14.4 13.4 13.5 14C11.5 15.3 5.5 10.5 6.5 6Z" fill="#25b843"/></svg>
<div class="a" style="left:596px;top:546px;width:17px;height:14px;border-radius:7px;background:#0f6cbd;color:#fff;font-size:9px;line-height:14px;text-align:center">24</div>
<!-- chrome 2 -->
<svg style="left:623px;top:549px" width="20" height="20" viewBox="0 0 20 20"><circle cx="10" cy="10" r="9.5" fill="#db4437"/><path d="M10 10L1.8 14.75A9.5 9.5 0 0 0 10 19.5A9.5 9.5 0 0 0 18.2 14.75Z" fill="#0f9d58"/><path d="M10 10L18.2 5.25A9.5 9.5 0 0 1 18.2 14.75L10 19.5Z" fill="#ffcd40"/><path d="M10 10L1.8 5.25A9.5 9.5 0 0 0 1.8 14.75Z" fill="#db4437"/><circle cx="10" cy="10" r="4.4" fill="#fff"/><circle cx="10" cy="10" r="3.5" fill="#4285f4"/></svg>
<div class="a" style="left:632px;top:545px;width:14px;height:14px;border-radius:50%;background:radial-gradient(circle at 50% 42%,#d8b9a6 0 2.6px,#2a2a2a 3.3px,#1c1c1c 7px)"></div>
<!-- calculator -->
<svg style="left:660px;top:549px" width="16" height="19" viewBox="0 0 16 19"><rect x="0.5" y="0.5" width="15" height="18" rx="1.5" fill="#5f6b7a"/><rect x="2" y="2" width="12" height="3.5" fill="#4fc3f7"/><g fill="#e6e9ee"><rect x="2" y="7" width="3" height="2.5"/><rect x="6.5" y="7" width="3" height="2.5"/><rect x="11" y="7" width="3" height="2.5"/><rect x="2" y="11" width="3" height="2.5"/><rect x="6.5" y="11" width="3" height="2.5"/><rect x="2" y="15" width="3" height="2.5"/><rect x="6.5" y="15" width="3" height="2.5"/></g><rect x="11" y="11" width="3" height="6.5" fill="#1565c0"/></svg>
<!-- sticky notes -->
<div class="a" style="left:687px;top:542px;width:32px;height:28px;border-radius:4px;background:#efc4c6"></div>
<svg style="left:694px;top:549px" width="18" height="18" viewBox="0 0 18 18"><path d="M0 0H18V11L11 18H0Z" fill="#2b2b2b"/><path d="M18 11L11 18H18Z" fill="#fcd116"/><path d="M11 18V13.5C11 12 11.8 11 13 11H18Z" fill="#f5c400"/></svg>
<!-- chrome B -->
<svg style="left:729px;top:549px" width="20" height="20" viewBox="0 0 20 20"><circle cx="10" cy="10" r="9.5" fill="#db4437"/><path d="M10 10L1.8 14.75A9.5 9.5 0 0 0 10 19.5A9.5 9.5 0 0 0 18.2 14.75Z" fill="#0f9d58"/><path d="M10 10L18.2 5.25A9.5 9.5 0 0 1 18.2 14.75L10 19.5Z" fill="#ffcd40"/><path d="M10 10L1.8 5.25A9.5 9.5 0 0 0 1.8 14.75Z" fill="#db4437"/><circle cx="10" cy="10" r="4.4" fill="#fff"/><circle cx="10" cy="10" r="3.5" fill="#4285f4"/></svg>
<div class="a" style="left:739px;top:545px;width:14px;height:14px;border-radius:50%;background:#2e6b2a;color:#d9ecd6;font-size:8px;line-height:14px;text-align:center">B</div>
<!-- tray -->
<svg style="left:811px;top:555px" width="10" height="6" viewBox="0 0 10 6"><path d="M0.8 5.2L5 1L9.2 5.2" stroke="#1f1f1f" stroke-width="1.3" fill="none"/></svg>
<svg style="left:834px;top:552px" width="17" height="12" viewBox="0 0 17 12"><path d="M3.5 10.5C1.8 10.5 0.8 9.3 0.8 8C0.8 6.5 2 5.5 3.3 5.5C3.8 3 5.8 1.3 8.3 1.3C10.8 1.3 12.8 3 13.2 5.3C14.8 5.5 15.8 6.6 15.8 8C15.8 9.4 14.7 10.5 13.2 10.5Z" fill="#6f7379"/><circle cx="12.5" cy="9" r="2.6" fill="#dce2f2"/><path d="M11 9A1.6 1.6 0 1 0 12.5 7.4" stroke="#1e88e5" stroke-width="1" fill="none"/></svg>
<svg style="left:862px;top:551px" width="11" height="14" viewBox="0 0 11 14"><rect x="3.2" y="0.6" width="4.6" height="8" rx="2.3" stroke="#3a6fd6" stroke-width="1.1" fill="none"/><path d="M1.2 6.5A4.3 4.3 0 0 0 9.8 6.5M5.5 10.8V13.5" stroke="#3a6fd6" stroke-width="1.1" fill="none"/></svg>
<svg style="left:887px;top:552px" width="14" height="11" viewBox="0 0 14 11"><path d="M1 4A8.5 8.5 0 0 1 13 4M3 6.2A5.5 5.5 0 0 1 11 6.2M5 8.3A2.8 2.8 0 0 1 9 8.3" stroke="#1f1f1f" stroke-width="1.2" fill="none"/><circle cx="7" cy="10" r="0.9" fill="#1f1f1f"/></svg>
<svg style="left:906px;top:552px" width="13" height="11" viewBox="0 0 13 11"><path d="M1 3.8H3.5L6.5 1V10L3.5 7.2H1Z" stroke="#1f1f1f" stroke-width="1" fill="none" stroke-linejoin="round"/><path d="M8.5 3.5A3 3 0 0 1 8.5 7.5M10.3 2A5 5 0 0 1 10.3 9" stroke="#1f1f1f" stroke-width="1" fill="none"/></svg>
<svg style="left:925px;top:551px" width="15" height="12" viewBox="0 0 15 12"><rect x="1" y="3.5" width="11.5" height="7" rx="1" fill="#1f1f1f"/><rect x="12.8" y="5.5" width="1.5" height="3" fill="#1f1f1f"/><path d="M2.5 1L5 4.5" stroke="#1f1f1f" stroke-width="1.3"/></svg>
<div class="t" style="left:956px;top:546.5px;font-size:9.6px;color:#1f1f1f">10:33 PM</div>
<div class="t" style="left:951px;top:559.5px;font-size:10px;color:#1f1f1f">9/23/2024</div>
<svg style="left:1005px;top:552px" width="12" height="15" viewBox="0 0 12 15"><path d="M6 1.5C3.5 1.5 2.3 3.3 2.3 5.8V9.5L0.8 11.5H11.2L9.7 9.5V5.8C9.7 3.3 8.5 1.5 6 1.5Z" fill="#1f1f1f"/><path d="M4.5 13H7.5" stroke="#1f1f1f" stroke-width="1.4"/><text x="8.5" y="6" font-family="Liberation Sans" font-size="5" fill="#dce2f2" font-weight="700">Z</text></svg>

</body></html>
